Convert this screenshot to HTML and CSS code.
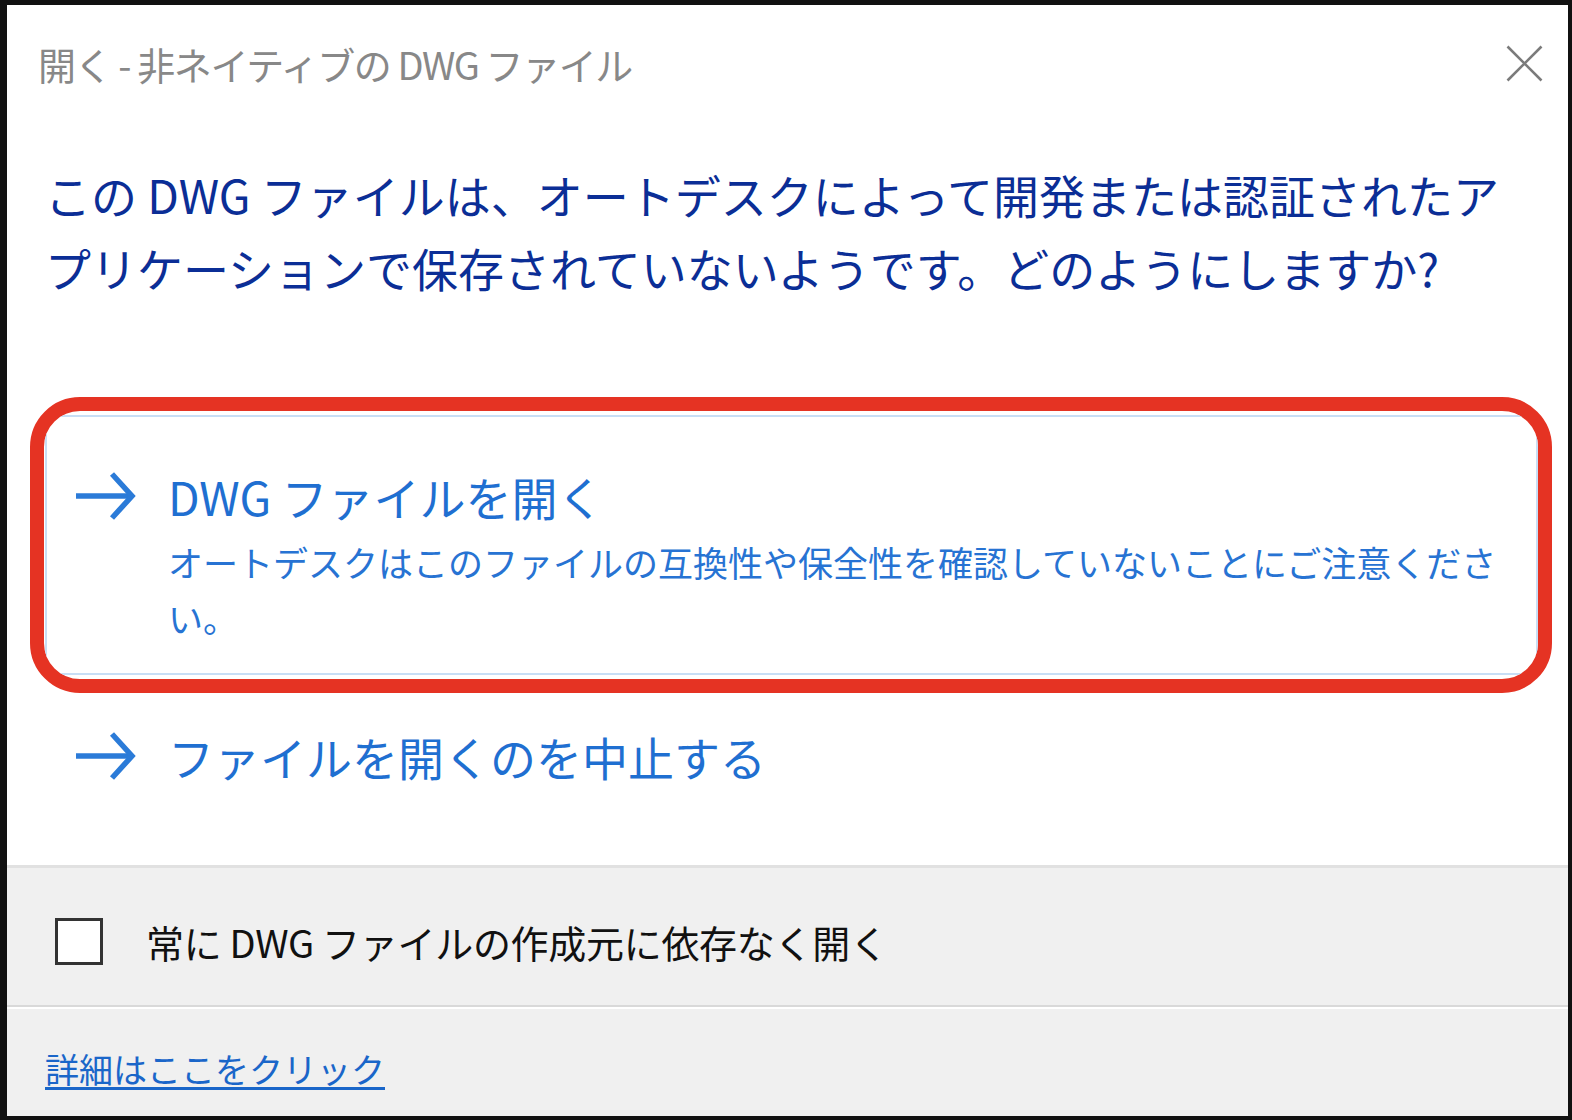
FILE: index.html
```html
<!DOCTYPE html>
<html lang="ja">
<head>
    <meta charset="UTF-8">
    <title>開く - 非ネイティブの DWG ファイル</title>
    <link rel="stylesheet" href="styles.css">
</head>
<body>
<div class="dialog">
    <div class="titlebar">
        <span class="title">開く - 非ネイティブの DWG ファイル</span>
        <button class="close">
            <svg viewBox="0 0 37 37"><path d="M1.5,1.5L35.5,35.5M35.5,1.5L1.5,35.5"></path></svg>
        </button>
    </div>
    <div class="main">
        <p class="instruction">この DWG ファイルは、オートデスクによって開発または認証されたアプリケーションで保存されていないようです。どのようにしますか?</p>
        <div class="mark">
            <button class="cmdlink hover">
                <svg class="arrow" viewBox="0 0 62 60">
                    <path d="M2,30H57"></path>
                    <path d="M38,8L58,30L38,52"></path>
                </svg>
                <span class="cmdtext">
                    <span class="cmdtitle">DWG ファイルを開く</span>
                    <span class="cmdnote">オートデスクはこのファイルの互換性や保全性を確認していないことにご注意ください。</span>
                </span>
            </button>
        </div>
        <button class="cmdlink second">
            <svg class="arrow" viewBox="0 0 62 60">
                <path d="M2,30H57"></path>
                <path d="M38,8L58,30L38,52"></path>
            </svg>
            <span class="cmdtext">
                <span class="cmdtitle">ファイルを開くのを中止する</span>
            </span>
        </button>
    </div>
    <div class="footer">
        <label class="check"><span class="box"></span>常に DWG ファイルの作成元に依存なく開く</label>
        <div class="more"><a href="#">詳細はここをクリック</a></div>
    </div>
</div>
</body>
</html>
```

FILE: styles.css
```css
*{
    box-sizing: border-box;
}
html, body{
    margin: 0;
    height: 100%;
}
body{
    background-color: #111;
    padding: 5px 4px 4px 7px;
    font-family: "Noto Sans CJK JP", "Noto Sans", sans-serif;
}
.dialog{
    height: 1111px;
    background-color: #fff;
    display: flex;
    flex-direction: column;
}
.titlebar{
    height: 116px;
    display: flex;
    align-items: center;
    justify-content: space-between;
    padding: 0 25px 0 31px;
}
.title{
    font-size: 38px;
    letter-spacing: -1.4px;
    color: #888;
}
.close{
    all: unset;
    width: 37px;
    height: 37px;
    display: flex;
}
.close svg{
    width: 37px;
    height: 37px;
    stroke: #7b7b7b;
    stroke-width: 2.6;
    fill: none;
}
.main{
    flex: 1;
    padding: 37px 16px 0 38px;
}
.instruction{
    margin: 0 30px 0 0;
    font-size: 46px;
    line-height: 73px;
    color: #0b2e96;
}
.mark{
    margin: 93px 0 0 -15px;
    border: 14px solid #e53323;
    border-radius: 50px;
    padding: 4px 0 4px 1px;
    overflow: hidden;
}
.cmdlink{
    all: unset;
    box-sizing: border-box;
    display: flex;
    align-items: flex-start;
    gap: 32px;
    width: 100%;
    border: 2px solid transparent;
    padding: 49px 30px 27px 27px;
}
.hover{
    border-color: #c8def5;
    border-radius: 4px;
}
.second{
    margin-top: 11px;
    padding-top: 20px;
    padding-bottom: 20px;
}
.arrow{
    flex: none;
    width: 62px;
    height: 60px;
    stroke: #2b7bd8;
    stroke-width: 5.5;
    fill: none;
}
.cmdtext{
    display: block;
}
.cmdtitle{
    display: block;
    font-size: 46px;
    line-height: 60px;
    color: #1f6fd1;
}
.cmdnote{
    display: block;
    margin-top: 8px;
    font-size: 35px;
    line-height: 56px;
    color: #2773d3;
}
.footer{
    border-top: 3px solid #e1e1e1;
    background-color: #f0f0f0;
    display: flex;
    flex-direction: column;
}
.check{
    height: 137px;
    display: flex;
    align-items: center;
    gap: 43px;
    padding: 10px 0 0 48px;
    font-size: 38px;
    letter-spacing: -0.3px;
    color: #111;
}
.box{
    width: 48px;
    height: 47px;
    border: 3px solid #333;
    background-color: #fff;
}
.more{
    height: 111px;
    border-top: 2px solid #d9d9d9;
    box-shadow: inset 0 2px 0 #fff;
    display: flex;
    align-items: center;
    padding: 13px 0 0 38px;
}
.more a{
    font-size: 34px;
    color: #1a66c9;
    text-decoration: underline;
    text-underline-offset: 4px;
}
```
